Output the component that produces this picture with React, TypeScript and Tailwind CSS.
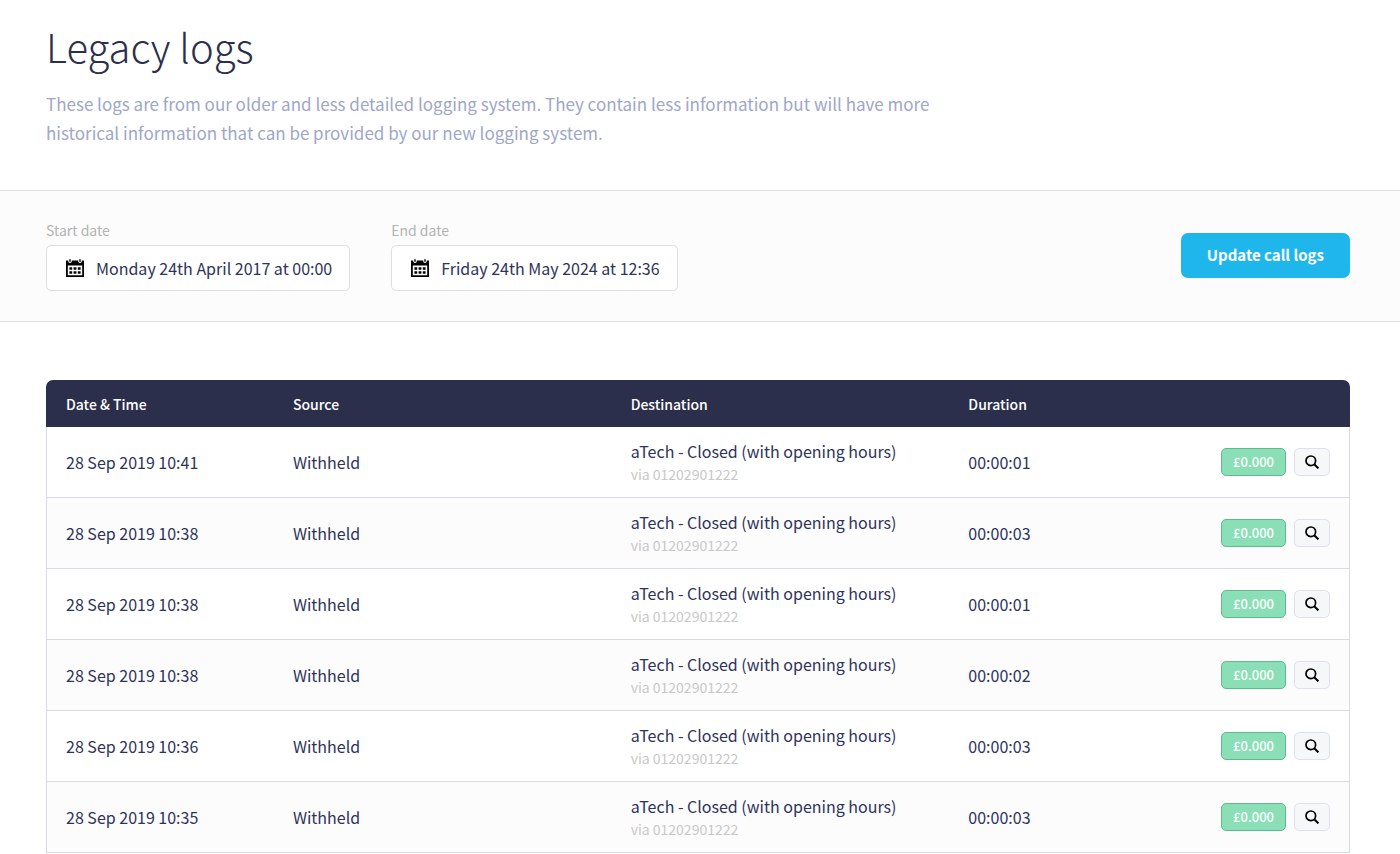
import React from "react";

type Log = {
  date: string;
  source: string;
  destination: string;
  via: string;
  duration: string;
  cost: string;
};

const makeLog = (time: string, duration: string): Log => ({
  date: `28 Sep 2019 ${time}`,
  source: "Withheld",
  destination: "aTech - Closed (with opening hours)",
  via: "via 01202901222",
  duration,
  cost: "£0.000",
});

const logs: Log[] = [
  makeLog("10:41", "00:00:01"),
  makeLog("10:38", "00:00:03"),
  makeLog("10:38", "00:00:01"),
  makeLog("10:38", "00:00:02"),
  makeLog("10:36", "00:00:03"),
  makeLog("10:35", "00:00:03"),
];

const CalendarIcon = () => (
  <svg viewBox="0 0 18 18" className="h-[18px] w-[18px] shrink-0" aria-hidden="true">
    <path
      fillRule="evenodd"
      fill="#000"
      d="M0 1.5H2.2V2.2A1.8 1.8 0 0 0 5.8 2.2V1.5H12.2V2.2A1.8 1.8 0 0 0 15.8 2.2V1.5H18V18H0ZM1.8 6.6V16.2H16.2V6.6Z"
    />
    <path stroke="#000" strokeWidth="1.4" strokeLinecap="round" d="M4 .8V2.2M14 .8V2.2" />
    <path
      fill="#000"
      d="M3.4 8.2H6.2V10.8H3.4ZM7.6 8.2H10.4V10.8H7.6ZM11.8 8.2H14.6V10.8H11.8ZM3.4 12.2H6.2V14.8H3.4ZM7.6 12.2H10.4V14.8H7.6ZM11.8 12.2H14.6V14.8H11.8Z"
    />
  </svg>
);

const SearchIcon = () => (
  <svg viewBox="0 0 14 14" className="h-[14px] w-[14px]" fill="none" stroke="#000" aria-hidden="true">
    <circle cx="5.8" cy="5.8" r="4.8" strokeWidth="1.7" />
    <path d="M9.2 9.2L13.4 13.4" strokeWidth="2" />
  </svg>
);

const DateField = ({ id, label, value }: { id: string; label: string; value: string }) => (
  <div>
    <label htmlFor={id} className="block text-sm leading-5 text-[#b3b3b3]">
      {label}
    </label>
    <div className="mt-[5px] flex h-[46px] items-center gap-3 rounded-[5px] border border-[#dedede] bg-white pr-[17px] pl-[19px]">
      <CalendarIcon />
      <input
        id={id}
        type="text"
        readOnly
        defaultValue={value}
        className="bg-transparent text-base text-[#2e335b] outline-none [field-sizing:content]"
      />
    </div>
  </div>
);

const App = () => (
  <div className="min-h-screen bg-white font-['Noto_Sans_CJK_SC','Noto_Sans',sans-serif] text-[#2e335b]">
    <header className="pt-4 pr-[50px] pb-[43px] pl-[46px]">
      <h1 className="text-[40px] leading-[60px] font-light text-[#2b2f4d]">Legacy logs</h1>
      <p className="mt-[13px] max-w-[900px] text-[17px] leading-[29px] text-[#a0a6c8]">
        These logs are from our older and less detailed logging system. They contain less information but will have more
        historical information that can be provided by our new logging system.
      </p>
    </header>

    {/* Filters */}
    <form
      className="flex items-start justify-between border-y border-[#dedede] bg-[#fcfcfc] pt-[29px] pr-[50px] pb-[30px] pl-[46px]"
      onSubmit={(e) => e.preventDefault()}
    >
      <div className="flex gap-[41px]">
        <DateField id="start-date" label="Start date" value="Monday 24th April 2017 at 00:00" />
        <DateField id="end-date" label="End date" value="Friday 24th May 2024 at 12:36" />
      </div>
      <button type="submit" className="mt-[13px] h-[45px] rounded-[7px] bg-[#1fb6ec] px-[26px] text-[15px] font-bold text-white">
        Update call logs
      </button>
    </form>

    {/* Logs table */}
    <main className="pt-[58px] pr-[50px] pl-[46px]">
      <div className="overflow-hidden rounded-t-[7px]">
        <table className="w-full table-fixed border-separate border-spacing-0 text-left">
          <thead className="bg-[#2b2f4b] text-sm text-white">
            <tr className="h-[47px]">
              <th className="w-[17.4%] px-5 font-medium">Date &amp; Time</th>
              <th className="w-[25.9%] px-5 font-medium">Source</th>
              <th className="w-[25.9%] px-5 font-medium">Destination</th>
              <th className="px-5 font-medium">Duration</th>
              <th className="w-[13%] px-5" aria-label="Actions" />
            </tr>
          </thead>
          <tbody>
            {logs.map((log, i) => (
              <tr key={i} className="h-[71px] even:bg-[#fcfcfc]">
                <td className="border-b border-l border-[#d8dae6] pr-5 pl-[19px]">{log.date}</td>
                <td className="border-b border-[#d8dae6] px-5">{log.source}</td>
                <td className="border-b border-[#d8dae6] px-5 whitespace-nowrap">
                  <div className="leading-6">{log.destination}</div>
                  <div className="text-sm leading-[22px] text-[#c8c8c8]">{log.via}</div>
                </td>
                <td className="border-b border-[#d8dae6] px-5">{log.duration}</td>
                <td className="border-r border-b border-[#d8dae6] pr-[19px] pl-5">
                  <div className="flex items-center justify-end gap-2">
                    <span className="flex h-7 items-center rounded-[5px] border border-[#5fbb8e] bg-[#8adfb7] px-[11px] text-[13px] font-medium text-white">
                      {log.cost}
                    </span>
                    <button
                      type="button"
                      aria-label="View call"
                      className="flex h-7 w-9 items-center justify-center rounded-[5px] border border-[#dfe1ec] bg-[#f6f7f9]"
                    >
                      <SearchIcon />
                    </button>
                  </div>
                </td>
              </tr>
            ))}
          </tbody>
        </table>
      </div>
    </main>
  </div>
);

export default App;
